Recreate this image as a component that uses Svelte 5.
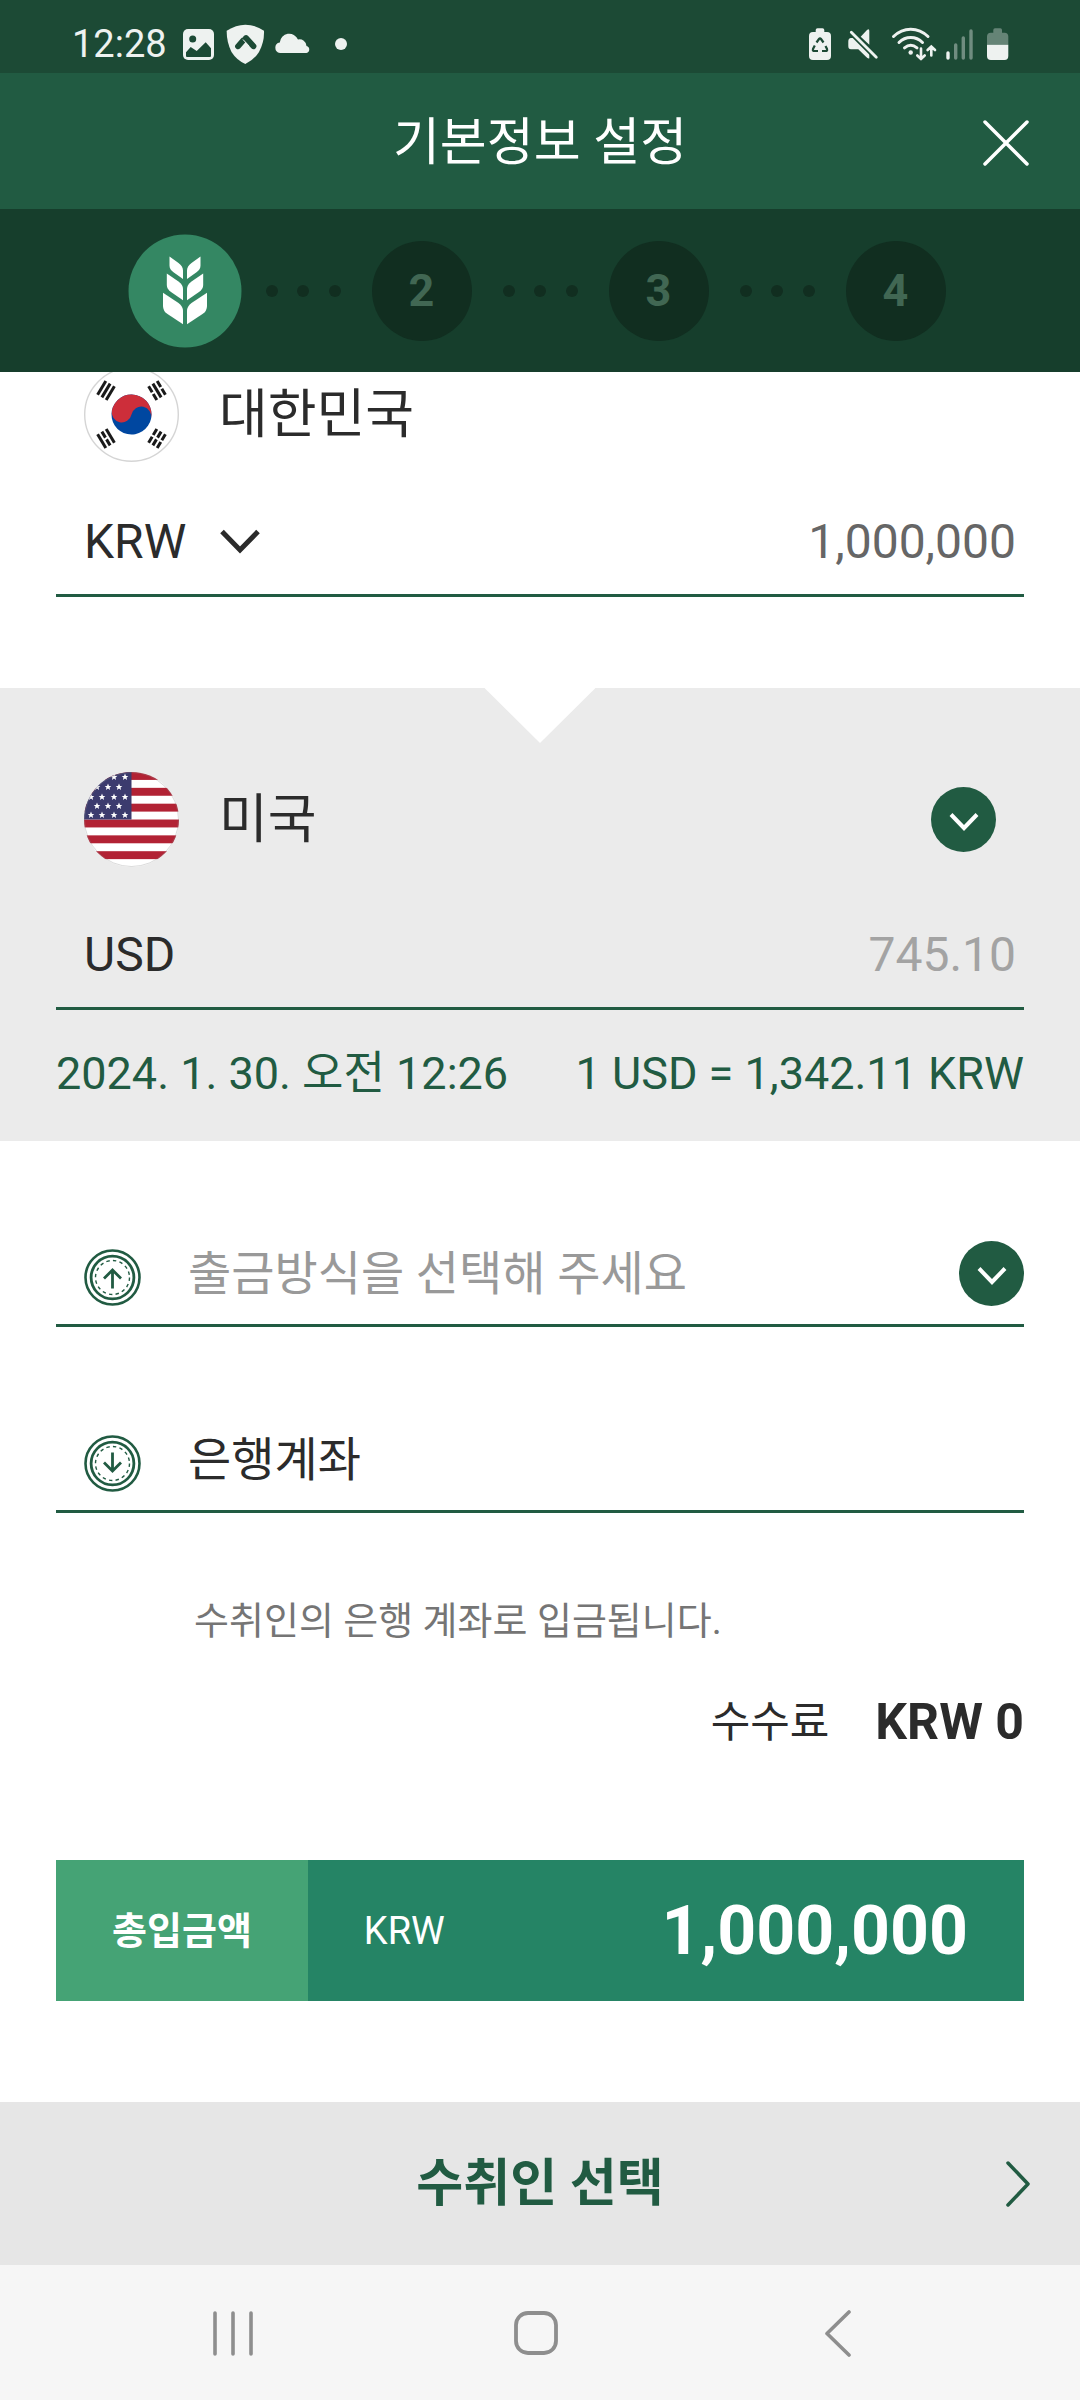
<script>
  const steps = [1, 2, 3, 4];
  let sourceCurrency = $state('KRW');
  let sendAmount = $state('1,000,000');
  let country = $state('미국');
  let receiveAmount = $state('745.10');
  let method = $state('');
  let payout = $state('은행계좌');

  const starRows = [
    [5, [18, 30, 41]],
    [15, [13, 24, 35]],
    [25, [7, 18, 30, 41]],
    [34, [13, 24, 35]],
    [43, [7, 18, 30, 41]]
  ];
  const stars = starRows.flatMap(([y, xs]) => xs.map((x) => ({ x, y })));
</script>

{#snippet roundChevron()}
  <svg class="round-chevron" viewBox="0 0 65 65" aria-hidden="true">
    <circle cx="32.5" cy="32.5" r="32.5" fill="#215b42" />
    <path d="M20 27.5 L33 41 L46 27.5" fill="none" stroke="#fff" stroke-width="4" />
  </svg>
{/snippet}

{#snippet coin(up)}
  <svg class="coin" viewBox="0 0 57 57" aria-hidden="true" fill="none" stroke="#215b42">
    <circle cx="28.5" cy="28.5" r="27" stroke-width="2.6" />
    <circle cx="28.5" cy="28.5" r="21.4" stroke-width="2.8" />
    <circle cx="28.5" cy="28.5" r="17" stroke-width="1.4" stroke-dasharray="3.4 3.27" />
    {#if up}
      <path d="M28.5 39.5 V21 M20 29.5 L28.5 21 L37 29.5" stroke-width="2.8" />
    {:else}
      <path d="M28.5 17.5 V36 M20 27.5 L28.5 36 L37 27.5" stroke-width="2.8" />
    {/if}
  </svg>
{/snippet}

{#snippet trigram(x, y, angle, broken)}
  <g transform="translate({x} {y}) rotate({angle})" stroke="#1a1a1a" stroke-width="3">
    {#each broken as split, i}
      {#if split}
        <path d="M{i * 5 - 5} -8 V-1 M{i * 5 - 5} 1 V8" />
      {:else}
        <path d="M{i * 5 - 5} -8 V8" />
      {/if}
    {/each}
  </g>
{/snippet}

<div class="screen">
  <div class="status">
    <div class="status-left">
      <span class="clock">12:28</span>
      <svg class="status-apps" viewBox="0 0 164 44" fill="#eef2f0" aria-hidden="true">
        <rect x="0" y="7" width="31" height="31" rx="5" />
        <g fill="#1c4a35">
          <circle cx="9.7" cy="17" r="3.5" />
          <path d="M3 30.3 L7.7 25 L13.7 29 L22.7 20.3 L28 26.3 V34 Q28 35 27 35 H4 Q3 35 3 34 Z" />
        </g>
        <path d="M43.7 8.7 Q53 2.7 62.3 2.7 Q72 2.7 81 8.7 Q81.500 20 76 30 Q71 38 62.3 42 Q53.500 38 48.500 30 Q43.500 20 43.7 8.700 Z" />
        <g stroke="#1c4a35" stroke-width="5.8" stroke-linecap="round">
          <path d="M55 24.300 L60 18.600" />
          <path d="M63 16 L70.500 24.300" />
        </g>
        <path d="M60 17.500 L66 24" stroke="#eef2f0" stroke-width="1" />
        <path d="M97 31 A5.300 5.300 0 0 1 96.800 20.500 A9.500 9.500 0 0 1 115 17.500 A7 7 0 0 1 123.500 24 A3.600 3.600 0 0 1 123.500 31 Z" />
        <circle cx="158" cy="22" r="6" />
      </svg>
    </div>
    <svg class="status-system" viewBox="0 0 200 44" fill="#eef2f0" aria-hidden="true">
      <path d="M6.700 10 V8 Q6.700 6.300 8.500 6.300 H13.500 Q15.300 6.300 15.300 8 V10 H18 Q22 10 22 14 V34 Q22 38 18 38 H4 Q0 38 0 34 V14 Q0 10 4 10 Z" />
      <path d="M7.500 20.500 L10 17 Q11 15.700 12 17 L14.500 20.500 M16.500 24 L18 27 Q18.700 29 16.500 29 H13 M9 29 H5.500 Q3.300 29 4 27 L5.800 23.500" fill="none" stroke="#1c4a35" stroke-width="2.200" />
      <path d="M42 16 H48 L60.300 28.500 V36.300 Q59 37 57 34.800 L49.300 27.300 H42 Q39.300 27.300 39.300 24 V19.500 Q39.300 16 42 16 Z" />
      <path d="M51.700 14.700 L58 8 Q60.300 6 60.300 9 V22.800 Z" />
      <path d="M42.300 10.300 L67.300 35.300" stroke="#1c4a35" stroke-width="6" />
      <path d="M42.300 10.300 L67.300 35.300" stroke="#eef2f0" stroke-width="2.800" stroke-linecap="round" />
      <g fill="none" stroke="#eef2f0" stroke-width="3" stroke-linecap="round">
        <path d="M84.500 14.500 Q92 7.200 101.700 7.200 Q111.500 7.200 119 14.500" />
        <path d="M90 20.500 Q95 15.500 101.700 15.500 Q108.500 15.500 113.500 20.500" />
        <path d="M95.500 25.800 Q101.700 20.800 108 25.800" />
        <path d="M112 26.500 V37 M108.300 33.500 L112 37 L115.700 33.500 M122.300 33.500 V24.500 M118.600 28 L122.300 24.500 L126 28" stroke-width="2.600" />
      </g>
      <circle cx="101.700" cy="30.500" r="2.200" />
      <g stroke="#eef2f0" stroke-width="3.400" stroke-linecap="round">
        <path d="M139 31 V36" />
        <g opacity="0.400"><path d="M146.700 23 V36 M154.300 16 V36 M162 9 V36" /></g>
      </g>
      <path opacity="0.350" d="M184.300 10.700 V8 Q184.300 6.300 186 6.300 H191.300 Q193 6.300 193 8 V10.700 H195.500 Q199.300 10.700 199.300 14.500 V22.700 H178 V14.500 Q178 10.700 181.800 10.700 Z" />
      <path d="M178 22.700 H199.300 V34 Q199.300 38 195.500 38 H181.800 Q178 38 178 34 Z" />
    </svg>
  </div>

  <header class="header">
    <h1>기본정보 설정</h1>
    <button class="close" type="button" aria-label="닫기">
      <svg viewBox="0 0 46 46" aria-hidden="true">
        <path d="M2 2 L44 44 M44 2 L2 44" stroke="#fff" stroke-width="3.500" stroke-linecap="round" />
      </svg>
    </button>
  </header>

  <ol class="steps">
    {#each steps as step}
      {#if step > 1}
        <li class="dots" aria-hidden="true"><i></i><i></i><i></i></li>
      {/if}
      {#if step === 1}
        <li class="step current" aria-current="step" aria-label="1">
          <svg viewBox="0 0 114 114" aria-hidden="true">
            <circle cx="57" cy="57" r="56.500" fill="#348763" />
            {#each [1, -1] as side}
              <g fill="#fff" transform="translate({side === 1 ? 0 : 114} 0) scale({side} 1)">
                <path d="M72.500 22.500 L63.500 29 Q59 32.300 59 36.500 V45 L68.500 38.300 Q72.500 35.500 72.500 31.500 Z" />
                <path d="M75.200 39.500 L63.500 47.500 Q59 50.800 59 55 V66.300 L71 58 Q75.200 55 75.200 51 Z" />
                <path d="M79 58.800 L63.500 69 Q59 72.300 59 77 V90.300 L74.500 80 Q79 77 79 72 Z" />
              </g>
            {/each}
          </svg>
        </li>
      {:else}
        <li class="step">{step}</li>
      {/if}
    {/each}
  </ol>

  <main>
    <section class="source">
      <div class="country">
        <svg class="flag" viewBox="0 0 95 95" role="img" aria-label="대한민국 국기">
          <circle cx="47.500" cy="47.500" r="46.800" fill="#fff" stroke="#d5d5d5" stroke-width="1.400" />
          <g transform="translate(47.500 47.500)">
            <g transform="rotate(12)">
              <circle r="20" fill="#0047a0" />
              <path d="M-20 0 A20 20 0 0 1 20 0 A10 10 0 0 0 0 0 A10 10 0 0 1 -20 0 Z" fill="#cd2e3a" />
            </g>
            {@render trigram(-25.5, -24, 31, [false, false, false])}
            {@render trigram(25.5, -24, -31, [true, false, true])}
            {@render trigram(-25.5, 24, -31, [false, true, false])}
            {@render trigram(25.5, 24, 31, [true, true, true])}
          </g>
        </svg>
        <span class="country-name">대한민국</span>
      </div>
      <div class="amount">
        <label class="currency">
          <select bind:value={sourceCurrency} aria-label="통화">
            <option>KRW</option>
          </select>
          <svg class="chevron" viewBox="0 0 40 26" aria-hidden="true">
            <path d="M2 2.500 L20 21 L38 2.500" fill="none" stroke="#2b2b2b" stroke-width="5" />
          </svg>
        </label>
        <input class="send" bind:value={sendAmount} inputmode="numeric" aria-label="보내는 금액" />
      </div>
    </section>

    <section class="target">
      <svg class="notch" viewBox="0 0 111 55" aria-hidden="true"><path d="M0 0 H111 L55.500 55 Z" fill="#fff" /></svg>
      <label class="country">
        <svg class="flag" viewBox="0 0 95 95" role="img" aria-label="미국 국기">
          <defs>
            <clipPath id="us-round"><circle cx="47.500" cy="47.500" r="47.500" /></clipPath>
            <path id="us-star" d="M0 -3.400 L1 -1.100 L3.300 -1 L1.500 0.600 L2.100 2.900 L0 1.600 L-2.100 2.900 L-1.500 0.600 L-3.300 -1 L-1 -1.100 Z" fill="#fff" />
          </defs>
          <g clip-path="url(#us-round)">
            <rect width="95" height="95" fill="#fff" />
            {#each [0, 1, 2, 3, 4, 5] as n}
              <rect y={n * 15.84} width="95" height="7.920" fill="#b22234" />
            {/each}
            <rect width="47.500" height="47.500" fill="#3c3b6e" />
            {#each stars as s}
              <use href="#us-star" x={s.x} y={s.y} />
            {/each}
          </g>
          <circle cx="47.500" cy="47.500" r="47" fill="none" stroke="#888" stroke-opacity="0.300" />
        </svg>
        <select class="country-name" bind:value={country} aria-label="받는 국가">
          <option>미국</option>
        </select>
        {@render roundChevron()}
      </label>
      <div class="amount">
        <label for="receive">USD</label>
        <input id="receive" class="receive" bind:value={receiveAmount} inputmode="decimal" />
      </div>
      <div class="rate">
        <span>2024. 1. 30. 오전 12:26</span>
        <span>1 USD = 1,342.11 KRW</span>
      </div>
    </section>

    <section class="details">
      <label class="field">
        {@render coin(true)}
        <select class="empty" bind:value={method} aria-label="출금방식">
          <option value="">출금방식을 선택해 주세요</option>
        </select>
        {@render roundChevron()}
      </label>
      <label class="field">
        {@render coin(false)}
        <input bind:value={payout} readonly aria-label="입금방식" />
      </label>
      <p class="note">수취인의 은행 계좌로 입금됩니다.</p>
      <div class="fee">
        <span>수수료</span>
        <strong>KRW 0</strong>
      </div>
      <div class="total">
        <span class="total-label">총입금액</span>
        <div class="total-value">
          <span>KRW</span>
          <strong>1,000,000</strong>
        </div>
      </div>
    </section>
  </main>

  <button class="next" type="button">
    <span>수취인 선택</span>
    <svg viewBox="0 0 24 46" aria-hidden="true">
      <path d="M2 2 L22 23 L2 44" fill="none" stroke="#215b42" stroke-width="3.500" stroke-linecap="round" stroke-linejoin="round" />
    </svg>
  </button>

  <nav class="system-nav" aria-label="시스템">
    <button type="button" aria-label="최근 앱">
      <svg viewBox="0 0 48 48" aria-hidden="true"><path d="M6 4 V45 M24 4 V45 M42 4 V45" stroke="#8e8e8e" stroke-width="3.600" stroke-linecap="round" /></svg>
    </button>
    <button type="button" aria-label="홈">
      <svg viewBox="0 0 48 48" aria-hidden="true"><rect x="4" y="4" width="40" height="40" rx="12" fill="none" stroke="#8e8e8e" stroke-width="3.800" /></svg>
    </button>
    <button type="button" aria-label="뒤로">
      <svg viewBox="0 0 48 48" aria-hidden="true"><path d="M34 3 L12 24.500 L34 46" fill="none" stroke="#8e8e8e" stroke-width="3.600" stroke-linecap="round" stroke-linejoin="round" /></svg>
    </button>
  </nav>
</div>

<style>
  :global(body) {
    margin: 0;
    background: #fff;
  }

  .screen {
    display: flex;
    flex-direction: column;
    min-height: 100vh;
    color: #2b2b2b;
    font-family: Roboto, 'Noto Sans CJK KR', sans-serif;
  }

  .screen * {
    box-sizing: border-box;
  }

  svg {
    display: block;
    flex: none;
  }

  button,
  input,
  select {
    appearance: none;
    margin: 0;
    padding: 0;
    border: 0;
    border-radius: 0;
    background: none;
    color: inherit;
    font: inherit;
  }

  .status {
    display: flex;
    align-items: center;
    justify-content: space-between;
    height: 73px;
    padding: 15px 71px 0 72px;
    background: #1c4a35;
  }

  .status-left {
    display: flex;
    align-items: center;
    gap: 16px;
  }

  .clock {
    color: #eef2f0;
    font-size: 38px;
    line-height: 44px;
  }

  .status-apps {
    width: 164px;
    height: 44px;
  }

  .status-system {
    width: 200px;
    height: 44px;
  }

  .header {
    display: grid;
    grid-template-columns: 1fr auto 1fr;
    align-items: center;
    height: 136px;
    padding: 4px 51px 0;
    background: #215b42;
    color: #fff;
  }

  h1 {
    grid-column: 2;
    margin: 0;
    font-size: 51px;
    font-weight: 400;
    line-height: 60px;
  }

  .close {
    justify-self: end;
  }

  .close svg {
    width: 46px;
    height: 46px;
  }

  .steps {
    display: flex;
    align-items: center;
    justify-content: center;
    gap: 31px;
    height: 163px;
    margin: 0;
    padding: 0;
    background: #163e2c;
    list-style: none;
  }

  .step {
    display: grid;
    place-items: center;
    width: 100px;
    height: 100px;
    border-radius: 50%;
    background: #112e20;
    color: #416753;
    font-size: 45px;
    font-weight: 700;
  }

  .current {
    width: 114px;
    height: 114px;
    margin: 0 -7px;
    background: none;
  }

  .current svg {
    width: 114px;
    height: 114px;
  }

  .dots {
    display: flex;
    justify-content: space-between;
    width: 75px;
  }

  .dots i {
    width: 12px;
    height: 12px;
    border-radius: 50%;
    background: #112e20;
  }

  main {
    flex: 1;
    overflow: hidden;
  }

  .source {
    margin-top: -5px;
    padding: 0 56px 91px;
  }

  .country {
    display: flex;
    align-items: center;
    padding: 0 28px;
  }

  .flag {
    width: 95px;
    height: 95px;
    margin-right: 40px;
  }

  .country-name {
    flex: 1;
    font-size: 53px;
    line-height: 64px;
  }

  .round-chevron {
    width: 65px;
    height: 65px;
  }

  .amount {
    display: flex;
    align-items: center;
    justify-content: space-between;
    height: 109px;
    margin-top: 26px;
    padding: 2px 8px 0 28px;
    border-bottom: 3px solid #215b42;
    font-size: 48px;
    line-height: 56px;
  }

  .currency {
    display: flex;
    align-items: center;
    gap: 33px;
  }

  .chevron {
    width: 40px;
    height: 26px;
  }

  .amount input {
    flex: 1;
    min-width: 0;
    text-align: right;
  }

  .send {
    color: #666;
  }

  .receive {
    color: #a3a3a3;
  }

  .target {
    position: relative;
    padding: 84px 56px 0;
    background: #ebebeb;
  }

  .notch {
    position: absolute;
    top: 0;
    left: 50%;
    width: 111px;
    height: 55px;
    transform: translateX(-50%);
  }

  .target .amount {
    margin-top: 34px;
  }

  .rate {
    display: flex;
    justify-content: space-between;
    padding: 37px 0 40px;
    color: #215b42;
    font-size: 45px;
    line-height: 54px;
  }

  .details {
    padding: 100px 56px 101px;
  }

  .field {
    display: flex;
    align-items: flex-end;
    height: 86px;
    padding: 0 0 18px 28px;
    border-bottom: 3px solid #215b42;
    font-size: 47px;
    line-height: 65px;
  }

  .field + .field {
    margin-top: 100px;
  }

  .field select,
  .field input {
    flex: 1;
    min-width: 0;
    height: 65px;
  }

  .coin {
    width: 57px;
    height: 57px;
    margin-right: 47px;
  }

  .empty {
    color: #999;
  }

  .note {
    margin: 80px 0 0;
    padding-left: 138px;
    color: #757575;
    font-size: 38px;
    line-height: 56px;
  }

  .fee {
    display: flex;
    align-items: center;
    justify-content: flex-end;
    gap: 46px;
    margin-top: 43px;
    font-size: 43px;
    line-height: 60px;
  }

  .fee strong {
    font-size: 50px;
  }

  .total {
    display: flex;
    height: 141px;
    margin-top: 108px;
    background: #258465;
    color: #fff;
    font-size: 38px;
    line-height: 56px;
  }

  .total-label {
    display: grid;
    place-items: center;
    padding: 0 56px;
    background: #45a375;
    font-weight: 700;
  }

  .total-value {
    display: flex;
    flex: 1;
    align-items: center;
    justify-content: space-between;
    padding: 0 56px;
  }

  .total-value strong {
    font-size: 68px;
  }

  .next {
    display: grid;
    grid-template-columns: 1fr auto 1fr;
    align-items: center;
    height: 163px;
    padding: 0 50px;
    background: #e6e6e6;
    color: #215b42;
    font-size: 51px;
    font-weight: 700;
    line-height: 60px;
  }

  .next span {
    grid-column: 2;
  }

  .next svg {
    justify-self: end;
    width: 24px;
    height: 46px;
  }

  .system-nav {
    display: flex;
    align-items: center;
    justify-content: space-around;
    height: 135px;
    padding: 0 90px 0 82px;
    background: #f6f6f6;
  }

  .system-nav svg {
    width: 48px;
    height: 48px;
  }
</style>
